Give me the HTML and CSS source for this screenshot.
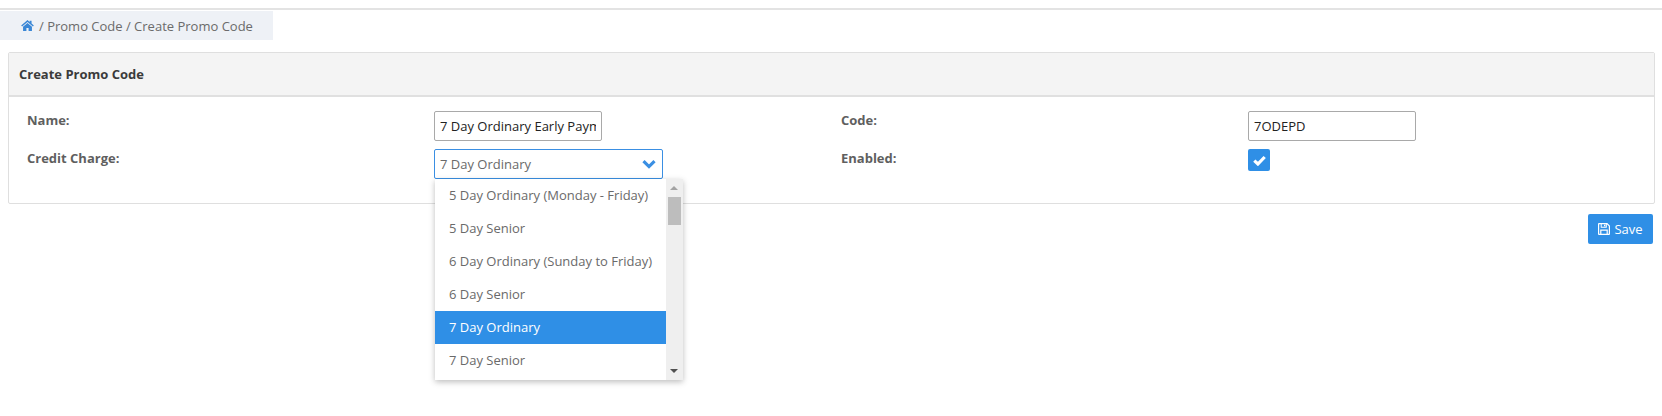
FILE: index.html
```html
<!DOCTYPE html>
<html lang="en">
<head>
<meta charset="utf-8">
<title>Create Promo Code</title>
<link rel="stylesheet" href="styles.css">
</head>
<body>
<div class="topbar"></div>
<nav class="crumbs">
  <svg class="home" viewBox="0 0 24 20" aria-hidden="true"><path d="M12 0 0.300 9.800l1.700 2L12 3.500l10 8.300 1.700-2-4.200-3.500V1h-3.500v2.400zM3.800 12.400V20h6.200v-5.500h4V20h6.200v-7.600L12 5.600z"/></svg>
  <span>/ Promo Code / Create Promo Code</span>
</nav>
<main class="content">
  <section class="panel">
    <header class="panel-head">Create Promo Code</header>
    <div class="form">
      <label class="lbl">Name:</label>
      <div class="cell"><input class="input" value="7 Day Ordinary Early Payment"></div>
      <label class="lbl">Code:</label>
      <div class="cell"><input class="input" value="7ODEPD"></div>
      <label class="lbl">Credit Charge:</label>
      <div class="cell">
        <div class="select">
          <span>7 Day Ordinary</span>
          <svg class="chev" viewBox="0 0 14 10" aria-hidden="true"><path d="M1.500 2.200 7 7.600l5.500-5.400" fill="none" stroke-width="3.200"/></svg>
          <div class="menu">
            <ul class="opts">
              <li>5 Day Ordinary (Monday - Friday)</li>
              <li>5 Day Senior</li>
              <li>6 Day Ordinary (Sunday to Friday)</li>
              <li>6 Day Senior</li>
              <li class="sel">7 Day Ordinary</li>
              <li>7 Day Senior</li>
            </ul>
            <div class="scroll">
              <i class="up"></i>
              <b class="thumb"></b>
              <i class="down"></i>
            </div>
          </div>
        </div>
      </div>
      <label class="lbl">Enabled:</label>
      <div class="cell">
        <span class="check"><svg viewBox="0 0 13 11" aria-hidden="true"><path d="M1.300 5.600 4.900 9 11.700 2" fill="none" stroke-width="3.200"/></svg></span>
      </div>
    </div>
  </section>
  <div class="actions">
    <button class="save" type="button">
      <svg viewBox="0 0 12 12" aria-hidden="true"><path fill-rule="evenodd" d="M1 0h8.300L12 2.700V11a1 1 0 0 1-1 1H1a1 1 0 0 1-1-1V1a1 1 0 0 1 1-1zM1.200 1.200v9.600h1V6.500h7.600v4.300h1V3.200L8.800 1.200V4.700H2.700V1.200zM3.700 1.200V3.700h4V1.200zM3.400 7.700v3.100h5.200V7.700zM6 1.700h1.200v1.500H6z"/></svg>
      Save
    </button>
  </div>
</main>
</body>
</html>
```
FILE: styles.css
```css
* { box-sizing: border-box; }
html, body { margin: 0; padding: 0; }
body {
  background: #fff;
  font-family: "Open Sans", "Noto Sans", sans-serif;
  font-size: 13px;
  color: #5f5f5f;
  height: 416px;
  overflow: hidden;
}
.topbar {
  height: 10px;
  border-bottom: 2px solid #e3e3e3;
}
.crumbs {
  width: 273px;
  height: 29px;
  margin-top: 1px;
  padding-left: 21px;
  background: #eef1f6;
  display: flex;
  align-items: center;
  gap: 5px;
  font-size: 13px;
  color: #6b6b6b;
}
.home { width: 13px; height: 11px; fill: #3a87d6; }
.content { padding: 12px 7px 0 8px; }
.panel { border: 1px solid #dfdfdf; border-radius: 2px; }
.panel-head {
  height: 44px;
  background: #f4f4f4;
  border-bottom: 2px solid #e0e0e0;
  padding-left: 10px;
  display: flex;
  align-items: center;
  font-weight: 700;
  font-size: 13px;
  color: #3b3b3b;
}
.form {
  display: grid;
  grid-template-columns: 407px 407px 407px 1fr;
  grid-template-rows: 38px 38px;
  padding: 14px 0 0 18px;
  height: 106px;
}
.lbl { font-weight: 700; font-size: 13px; color: #5f5f5f; line-height: 18px; }
.cell { position: relative; }
.input {
  display: block;
  width: 168px;
  height: 30px;
  border: 1px solid #a9a9a9;
  border-radius: 2px;
  padding: 0 5px;
  font: 13px "Open Sans", sans-serif;
  color: #222;
  background: #fff;
}
.select {
  position: relative;
  width: 229px;
  height: 30px;
  border: 1px solid #3a8fe3;
  border-radius: 2px;
  padding: 0 5px;
  display: flex;
  align-items: center;
  font-size: 13px;
  color: #6a6a6a;
}
.chev { position: absolute; right: 6px; top: 9px; width: 14px; height: 10px; stroke: #3a8fe3; }
.menu {
  position: absolute;
  left: 0;
  top: 29px;
  width: 248px;
  height: 201px;
  background: #fff;
  box-shadow: 0 2px 6px rgba(0,0,0,.26);
  display: flex;
  z-index: 5;
}
.opts { list-style: none; margin: 0; padding: 0; flex: 1; }
.opts li { height: 33px; padding-left: 14px; line-height: 33px; font-size: 13px; color: #6a6a6a; white-space: nowrap; }
.opts .sel { background: #2f8fe6; color: #fff; }
.scroll { width: 17px; background: #efefef; position: relative; }
.up, .down { position: absolute; left: 4px; width: 0; height: 0; border-left: 4px solid transparent; border-right: 4px solid transparent; }
.up { top: 7px; border-bottom: 4px solid #a3a3a3; }
.down { bottom: 7px; border-top: 4px solid #505050; }
.thumb { position: absolute; left: 2px; top: 18px; width: 13px; height: 28px; background: #bdbdbd; }
.check {
  display: flex;
  align-items: center;
  justify-content: center;
  width: 22px;
  height: 22px;
  border-radius: 2px;
  background: #2f8fe6;
}
.check svg { width: 13px; height: 11px; stroke: #fff; }
.actions { display: flex; justify-content: flex-end; padding: 10px 2px 0 0; }
.save {
  height: 30px;
  width: 65px;
  border: 0;
  border-radius: 2px;
  background: #2f8fe6;
  color: #fff;
  font: 13px "Open Sans", sans-serif;
  display: flex;
  align-items: center;
  justify-content: center;
  gap: 4px;
  padding: 0;
}
.save svg { width: 12px; height: 12px; fill: #fff; }
```
